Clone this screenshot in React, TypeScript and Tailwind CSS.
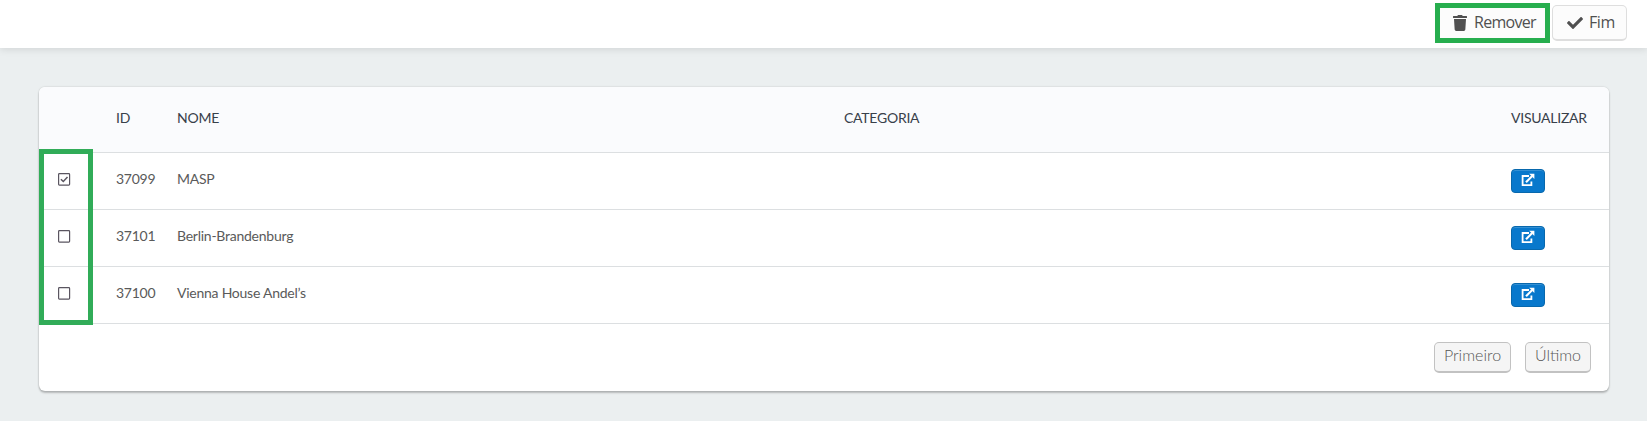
import React from "react";
import { FaTrash, FaCheck } from "react-icons/fa";

const rows = [
  { id: "37099", name: "MASP", checked: true },
  { id: "37101", name: "Berlin-Brandenburg", checked: false },
  { id: "37100", name: "Vienna House Andel’s", checked: false },
];

function CheckIcon({ checked }: { checked: boolean }) {
  return (
    <svg width="13" height="13" viewBox="0 0 13 13" fill="none" stroke="#5a5560">
      <rect x="0.6" y="0.6" width="11" height="11.5" rx="0.8" strokeWidth="1.2" />
      {checked && <path d="M2.9 6.2 L5.3 8.5 L9.5 4" strokeWidth="1.5" />}
    </svg>
  );
}

function OpenIcon() {
  return (
    <svg width="14" height="14" viewBox="0 0 14 14" fill="none" stroke="#fff">
      <path d="M8 3H1.6V12.1H10.4V8.4" strokeWidth="1.8" />
      <path d="M5 9.2L11.2 3" strokeWidth="2.1" />
      <path d="M8.2 0.8H13.4V6Z" fill="#fff" stroke="none" />
    </svg>
  );
}

const grid = "grid grid-cols-[77px_61px_667px_667px_1fr]";

export default function App() {
  return (
    <div className="h-[421px] overflow-hidden bg-[#ebeff0] font-['Lato',sans-serif] text-[14px] tracking-[-0.25px] text-[#5a5a5a]">
      <header className="flex h-12 items-start justify-end bg-white pr-5 pt-[3px] font-['Open_Sans',sans-serif] text-[#505050] shadow-[0_1px_8px_rgba(0,0,0,0.12)]">
        <button className="flex h-10 w-[115px] items-center border-[5px] border-[#27ae4e] bg-[#fcfcfc] pb-px pl-[13px]">
          <FaTrash className="h-[16px] w-[14px]" />
          <span className="ml-[7px] pb-[2px] text-[16px] leading-none tracking-[-0.7px]">Remover</span>
        </button>
        <button className="ml-[2px] mt-[2px] flex h-[36px] w-[75px] items-center rounded-[5px] border border-b-2 border-[#dedede] bg-[#fcfcfc] pl-[14px]">
          <FaCheck className="h-[16px] w-[16px]" />
          <span className="ml-[6px] pb-[2px] text-[16px] leading-none tracking-[-0.4px]">Fim</span>
        </button>
      </header>
      <main className="px-[39px] pt-[39px]">
        <section className="relative h-[304px] w-[1570px] rounded-[6px] bg-white shadow-[0_0_2px_rgba(0,0,0,0.2),0_2px_2px_rgba(0,0,0,0.22)]">
          <div className={`${grid} h-[66px] items-center rounded-t-[6px] border-b border-[#dcdfe1] bg-[#fafbfd] pb-[5px] text-[#38404a]`}>
            <span />
            <span>ID</span>
            <span>NOME</span>
            <span>CATEGORIA</span>
            <span>VISUALIZAR</span>
          </div>
          {rows.map((row) => (
            <div key={row.id} className={`${grid} h-[57px] items-center border-b border-[#dcdfe1]`}>
              <span className="pb-[3px] pl-[19px]"><CheckIcon checked={row.checked} /></span>
              <span className="pb-[5px]">{row.id}</span>
              <span className="pb-[5px]">{row.name}</span>
              <span />
              <button className="flex h-6 w-[34px] items-center justify-center rounded-[4px] border border-[#0868ad] bg-[#0878cc] pb-[3px] shadow-[inset_0_1px_0_#3390d4]">
                <OpenIcon />
              </button>
            </div>
          ))}
          <div className="flex justify-end gap-[14px] pr-[18px] pt-[18px] text-[16px] font-light tracking-normal text-[#555]">
            <button className="h-[31px] w-[77px] rounded-[5px] border border-b-2 border-[#c2c2c2] bg-[#f5f5f5] pb-[4px]">Primeiro</button>
            <button className="h-[31px] w-[66px] rounded-[5px] border border-b-2 border-[#c2c2c2] bg-[#f5f5f5] pb-[4px]">Último</button>
          </div>
          <div className="absolute left-0 top-[62px] h-[176px] w-[54px] border-[5px] border-[#31ac58]" />
        </section>
      </main>
    </div>
  );
}
